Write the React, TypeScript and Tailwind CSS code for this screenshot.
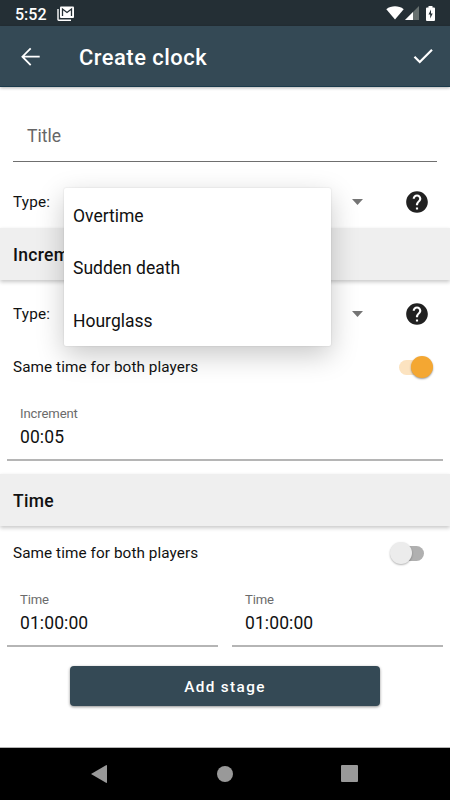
import { useState } from 'react'
import type { ReactNode } from 'react'

const CLOCK_TYPES = ['Overtime', 'Sudden death', 'Hourglass']

function StatusBar() {
  return (
    <div className="flex h-[26px] items-center bg-[#242f35] pl-[15px] pr-[15px] text-white">
      <span className="relative top-[2px] w-[31px] whitespace-nowrap text-[16px] font-medium">
        5:52
      </span>

      <svg className="ml-[11px] h-[15px] w-[17px]" viewBox="0 0 17 15" fill="none">
        <path d="M1 3v10.500a.7.700 0 0 0 .7.700H14" stroke="white" strokeWidth="1.400" />
        <rect x="3" y=".5" width="14" height="11.500" rx="1" fill="white" />
        <path d="M5.500 10V3l4.500 3.500L14.500 3v7" stroke="#242f35" strokeWidth="1.300" />
      </svg>

      <svg className="ml-auto h-[14px] w-[18px]" viewBox="0 0 18 14" fill="white">
        <path d="M.3 3.200C5.200-.6 12.800-.6 17.700 3.200L9 13.600z" />
      </svg>

      <svg className="ml-[1px] h-[14px] w-[14px]" viewBox="0 0 14 14">
        <path d="M0 14L14 0v14z" fill="#67706f" />
        <path d="M0 14L8 6v8z" fill="white" />
      </svg>

      <svg className="ml-[7px] h-[15px] w-[9px]" viewBox="0 0 9 15">
        <path d="M2.500 1.500V0h4v1.500H8a1 1 0 0 1 1 1V14a1 1 0 0 1-1 1H1a1 1 0 0 1-1-1V2.500a1 1 0 0 1 1-1z" fill="white" />
        <path d="M5 3.500L2.500 8.500h1.700v4l2.500-5H5z" fill="#242f35" />
      </svg>
    </div>
  )
}

function AppBar() {
  return (
    <header className="flex h-[61px] items-center border-b border-[#1b3a4b] bg-[#344955] px-[17px] text-white shadow-[0_1px_3px_rgba(0,0,0,0.3)]">
      <svg className="h-[27px] w-[27px]" viewBox="0 0 27 27" fill="none" stroke="white" strokeWidth="1.800">
        <path d="M22.700 13.700H5.800M13.700 5.300l-8.300 8.400 8.300 8.400" />
      </svg>

      <h1 className="ml-[35px] pt-[4px] text-[21.9px] font-medium tracking-[0.5px]">
        Create clock
      </h1>

      <svg className="-mr-[3px] ml-auto h-[26px] w-[26px]" viewBox="0 0 24 24" fill="white">
        <path d="M9 16.170L4.830 12l-1.420 1.410L9 19 21 7l-1.410-1.410z" />
      </svg>
    </header>
  )
}

function TypeRow({ children }: { children?: ReactNode }) {
  return (
    <div className="relative flex h-[52px] items-center pl-[13px] pr-[20px]">
      <span className="pt-px text-[15.3px] tracking-[0.2px]">Type:</span>

      <svg className="ml-auto h-[6px] w-[11px]" viewBox="0 0 11 6">
        <path d="M0 0h11L5.500 6z" fill="#757575" />
      </svg>

      <svg className="relative -top-[0.5px] ml-[41px] h-[26px] w-[26px]" viewBox="0 0 24 24" fill="#212121">
        <path d="M12 2C6.480 2 2 6.480 2 12s4.480 10 10 10 10-4.480 10-10S17.520 2 12 2zm1 17h-2v-2h2v2zm2.070-7.750l-.9.920C13.450 12.900 13 13.500 13 15h-2v-.5c0-1.100.45-2.100 1.170-2.830l1.240-1.260c.37-.36.590-.86.590-1.410 0-1.100-.9-2-2-2s-2 .9-2 2H8c0-2.210 1.790-4 4-4s4 1.790 4 4c0 .88-.36 1.680-.93 2.250z" />
      </svg>

      {children}
    </div>
  )
}

function TypeMenu() {
  return (
    <ul className="absolute left-[64px] top-[12px] z-10 h-[158px] w-[267px] rounded-[2px] bg-white shadow-[0_0_2px_rgba(0,0,0,0.14),0_9px_28px_rgba(0,0,0,0.22)]">
      {CLOCK_TYPES.map((type) => (
        <li
          key={type}
          className="flex h-[52.600px] items-center pl-[9px] pt-[3px] text-[17.5px]"
        >
          {type}
        </li>
      ))}
    </ul>
  )
}

function SectionHeader({ children }: { children: ReactNode }) {
  return (
    <h2 className="flex h-[52px] items-center bg-[#efefef] pl-[13px] pt-[2px] text-[17.5px] font-medium tracking-[0.3px] shadow-[0_2px_4px_rgba(0,0,0,0.22)]">
      {children}
    </h2>
  )
}

function SwitchRow({ defaultOn = false }: { defaultOn?: boolean }) {
  const [on, setOn] = useState(defaultOn)

  return (
    <div className="flex h-[52px] items-center justify-between pl-[13px] pr-[17px]">
      <span className="text-[15.3px] tracking-[0.08px]">
        Same time for both players
      </span>

      <button
        role="switch"
        aria-checked={on}
        onClick={() => setOn(!on)}
        className="relative h-[22px] w-[43px]"
      >
        {on ? (
          <>
            <span className="absolute left-[9px] top-[4px] h-[15px] w-[32px] rounded-full bg-[#fce3c0]" />
            <span className="absolute left-[21px] top-0 h-[22px] w-[22px] rounded-full bg-[#f4a732] shadow-[0_1px_2px_rgba(0,0,0,0.4)]" />
          </>
        ) : (
          <>
            <span className="absolute left-[3px] top-[4px] h-[15px] w-[31px] rounded-full bg-[#b0b0b0]" />
            <span className="absolute left-0 top-0 h-[22px] w-[22px] rounded-full bg-[#ececec] shadow-[0_1px_2px_rgba(0,0,0,0.3)]" />
          </>
        )}
      </button>
    </div>
  )
}

function TimeField({ label, value }: { label: string; value: string }) {
  return (
    <div className="h-[61px] flex-1 border-b-2 border-[#b5b5b5] pl-[13px] pt-[5px]">
      <p className="text-[13.1px] leading-[18px] tracking-[-0.12px] text-[#6b6b6b]">{label}</p>
      <p className="mt-[2px] text-[17.5px] leading-[24px] tracking-[0.1px]">{value}</p>
    </div>
  )
}

function NavigationBar() {
  return (
    <div className="mt-auto flex h-[53px] items-center justify-between border-t border-[#b3b3b3] bg-black pb-px pl-[91px] pr-[92px]">
      <svg className="h-[18px] w-[16px]" viewBox="0 0 16 18" fill="#999">
        <path d="M0 9L15 .2q1-.4 1 .5v16.600q0 .9-1 .5z" />
      </svg>
      <span className="ml-[2px] h-[16px] w-[16px] rounded-full bg-[#999]" />
      <span className="h-[17px] w-[17px] rounded-[1px] bg-[#999]" />
    </div>
  )
}

function App() {
  return (
    <div className="flex h-[800px] w-[450px] flex-col overflow-hidden bg-white font-[Roboto,sans-serif] text-[#111]">
      <StatusBar />
      <AppBar />

      <main>
        <div className="mx-[13px] mt-[21px] flex h-[54px] items-center border-b border-[#6f6f6f] pl-[14px] pt-[4px] text-[17.5px] text-[#666]">
          Title
        </div>

        <div className="mt-[14px]">
          <TypeRow>
            <TypeMenu />
          </TypeRow>
        </div>
        <SectionHeader>Increment</SectionHeader>

        <div className="mt-[8px]">
          <TypeRow />
        </div>
        <div className="mt-px">
          <SwitchRow defaultOn />
        </div>
        <div className="mx-[7px] mt-[7px] flex">
          <TimeField label="Increment" value="00:05" />
        </div>

        <div className="mt-[13px]">
          <SectionHeader>Time</SectionHeader>
        </div>
        <div className="mt-px">
          <SwitchRow />
        </div>
        <div className="mx-[7px] mt-[7px] flex gap-[14px]">
          <TimeField label="Time" value="01:00:00" />
          <TimeField label="Time" value="01:00:00" />
        </div>

        <button className="mx-auto mt-[19px] flex h-[40px] w-[310px] items-center justify-center rounded-[4px] bg-[#344955] pt-[2px] text-[15.3px] font-medium tracking-[1.37px] text-white shadow-[0_1px_3px_rgba(0,0,0,0.45)]">
          Add stage
        </button>
      </main>

      <NavigationBar />
    </div>
  )
}

export default App
